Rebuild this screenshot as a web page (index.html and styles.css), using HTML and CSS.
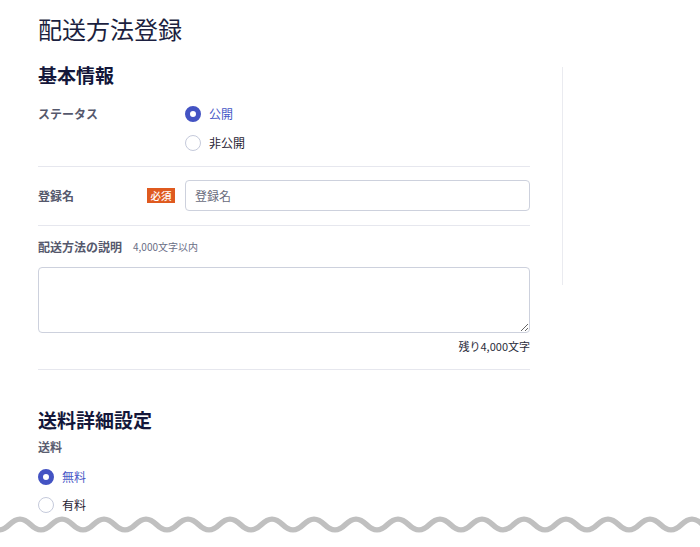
FILE: index.html
```html
<!DOCTYPE html>
<html lang="ja">
<head>
<meta charset="utf-8">
<title>配送方法登録</title>
<link rel="stylesheet" href="styles.css">
</head>
<body>
<div class="page">
  <h1 class="title">配送方法登録</h1>
  <div class="layout">
    <main class="form">
      <section class="section">
        <h2 class="section-title">基本情報</h2>
        <div class="row row-status">
          <div class="label-cell"><span class="label">ステータス</span></div>
          <div class="options">
            <label class="option option-on"><span class="radio radio-on"></span><span class="option-text">公開</span></label>
            <label class="option"><span class="radio"></span><span class="option-text">非公開</span></label>
          </div>
        </div>
        <div class="row row-name">
          <div class="label-cell"><span class="label">登録名</span><span class="badge">必須</span></div>
          <input class="text-input" type="text" placeholder="登録名">
        </div>
        <div class="block-row">
          <div class="desc-head"><span class="label">配送方法の説明</span><span class="hint">4,000文字以内</span></div>
          <textarea class="textarea"></textarea>
          <div class="counter">残り4,000文字</div>
        </div>
      </section>
      <section class="section section-fee">
        <h2 class="section-title">送料詳細設定</h2>
        <div class="sub-label">送料</div>
        <div class="options">
          <label class="option option-on"><span class="radio radio-on"></span><span class="option-text">無料</span></label>
          <label class="option"><span class="radio"></span><span class="option-text">有料</span></label>
        </div>
      </section>
    </main>
    <aside class="side"></aside>
  </div>
</div>
<div class="cut">
  <svg class="wave" width="700" height="24" viewBox="0 0 700 24">
    <path d="M -32.5 12.5 C -25 5.17 -19 5.17 -11.5 12.5 S 2 19.83 9.5 12.5 S 23 5.17 30.5 12.5 S 44 19.83 51.5 12.5 S 65 5.17 72.5 12.5 S 86 19.83 93.5 12.5 S 107 5.17 114.5 12.5 S 128 19.83 135.5 12.5 S 149 5.17 156.5 12.5 S 170 19.83 177.5 12.5 S 191 5.17 198.5 12.5 S 212 19.83 219.5 12.5 S 233 5.17 240.5 12.5 S 254 19.83 261.5 12.5 S 275 5.17 282.5 12.5 S 296 19.83 303.5 12.5 S 317 5.17 324.5 12.5 S 338 19.83 345.5 12.5 S 359 5.17 366.5 12.5 S 380 19.83 387.5 12.5 S 401 5.17 408.5 12.5 S 422 19.83 429.5 12.5 S 443 5.17 450.5 12.5 S 464 19.83 471.5 12.5 S 485 5.17 492.5 12.5 S 506 19.83 513.5 12.5 S 527 5.17 534.5 12.5 S 548 19.83 555.5 12.5 S 569 5.17 576.5 12.5 S 590 19.83 597.5 12.5 S 611 5.17 618.5 12.5 S 632 19.83 639.5 12.5 S 653 5.17 660.5 12.5 S 674 19.83 681.5 12.5 S 695 5.17 702.5 12.5 S 716 19.83 723.5 12.5" fill="none" stroke="#c0c0c0" stroke-width="5.5"/>
  </svg>
</div>
</body>
</html>
```

FILE: styles.css
```css
* { box-sizing: border-box; }

html, body {
  margin: 0;
  padding: 0;
  background: #ffffff;
  overflow: hidden;
}

body {
  font-family: "Noto Sans CJK JP", "Noto Sans", sans-serif;
  color: #1c1f3f;
  font-size: 12px;
}

.page {
  padding: 13px 0 0 38px;
}

.title {
  margin: 0;
  font-size: 24px;
  line-height: 32px;
  font-weight: 400;
  color: #1c1f40;
}

.layout {
  display: flex;
  align-items: flex-start;
  margin-top: 18px;
}

.form {
  width: 492px;
}

.side {
  margin-left: 32px;
  margin-top: 4px;
  width: 1px;
  height: 218px;
  border-left: 1px solid #eaebf0;
}

.section-title {
  margin: 0;
  font-size: 19px;
  line-height: 24px;
  font-weight: 700;
  color: #14173a;
}

.row {
  display: grid;
  grid-template-columns: 137px 1fr;
  column-gap: 10px;
  border-bottom: 1px solid #e6e7ee;
}

.row-status {
  padding: 17px 0 13px;
  align-items: start;
}

.row-name {
  padding: 13px 0 14px;
  align-items: center;
}

.label-cell {
  display: flex;
  align-items: center;
  justify-content: space-between;
  height: 20px;
}

.label {
  font-size: 12px;
  line-height: 20px;
  font-weight: 700;
  color: #55586c;
}

.badge {
  display: inline-block;
  background: #df5a1f;
  color: #ffffff;
  font-size: 10.5px;
  line-height: 15px;
  height: 15px;
  padding: 0 3.5px;
  font-weight: 500;
}

.options {
  display: flex;
  flex-direction: column;
  gap: 9px;
}

.section-fee .options {
  gap: 8px;
}

.option {
  display: flex;
  align-items: center;
  gap: 8px;
  height: 20px;
  font-size: 12px;
  line-height: 20px;
  color: #1f2233;
}

.option-on {
  color: #4656c6;
}

.radio {
  width: 16px;
  height: 16px;
  border-radius: 50%;
  border: 1.5px solid #c5cadb;
  background: #ffffff;
  flex: none;
}

.radio-on {
  border: 5px solid #4353c3;
}

.text-input {
  display: block;
  width: 100%;
  height: 31px;
  margin: 0;
  border: 1px solid #cdd1dd;
  border-radius: 4px;
  padding: 0 9px;
  font-family: "Noto Sans CJK JP", "Noto Sans", sans-serif;
  font-size: 12px;
  color: #222;
  background: #fff;
}

.text-input::placeholder {
  color: #686b7c;
}

.block-row {
  padding: 11px 0 15px;
  border-bottom: 1px solid #e6e7ee;
}

.desc-head {
  display: flex;
  align-items: center;
  gap: 11px;
  height: 20px;
}

.hint {
  font-size: 10px;
  line-height: 20px;
  color: #6a6e86;
}

.textarea {
  display: block;
  width: 100%;
  height: 66px;
  margin: 10px 0 0;
  border: 1px solid #cdd1dd;
  border-radius: 4px;
  font-family: "Noto Sans CJK JP", "Noto Sans", sans-serif;
  font-size: 12px;
  background: #fff;
}

.counter {
  margin-top: 5px;
  text-align: right;
  font-size: 11px;
  line-height: 16px;
  color: #2b2d3c;
}

.section-fee {
  padding-top: 38px;
}

.sub-label {
  margin-top: 5px;
  margin-bottom: 10px;
  font-size: 12px;
  line-height: 20px;
  font-weight: 700;
  color: #5a5d70;
}

.cut {
  margin-top: -3px;
}

.wave {
  display: block;
}
```
